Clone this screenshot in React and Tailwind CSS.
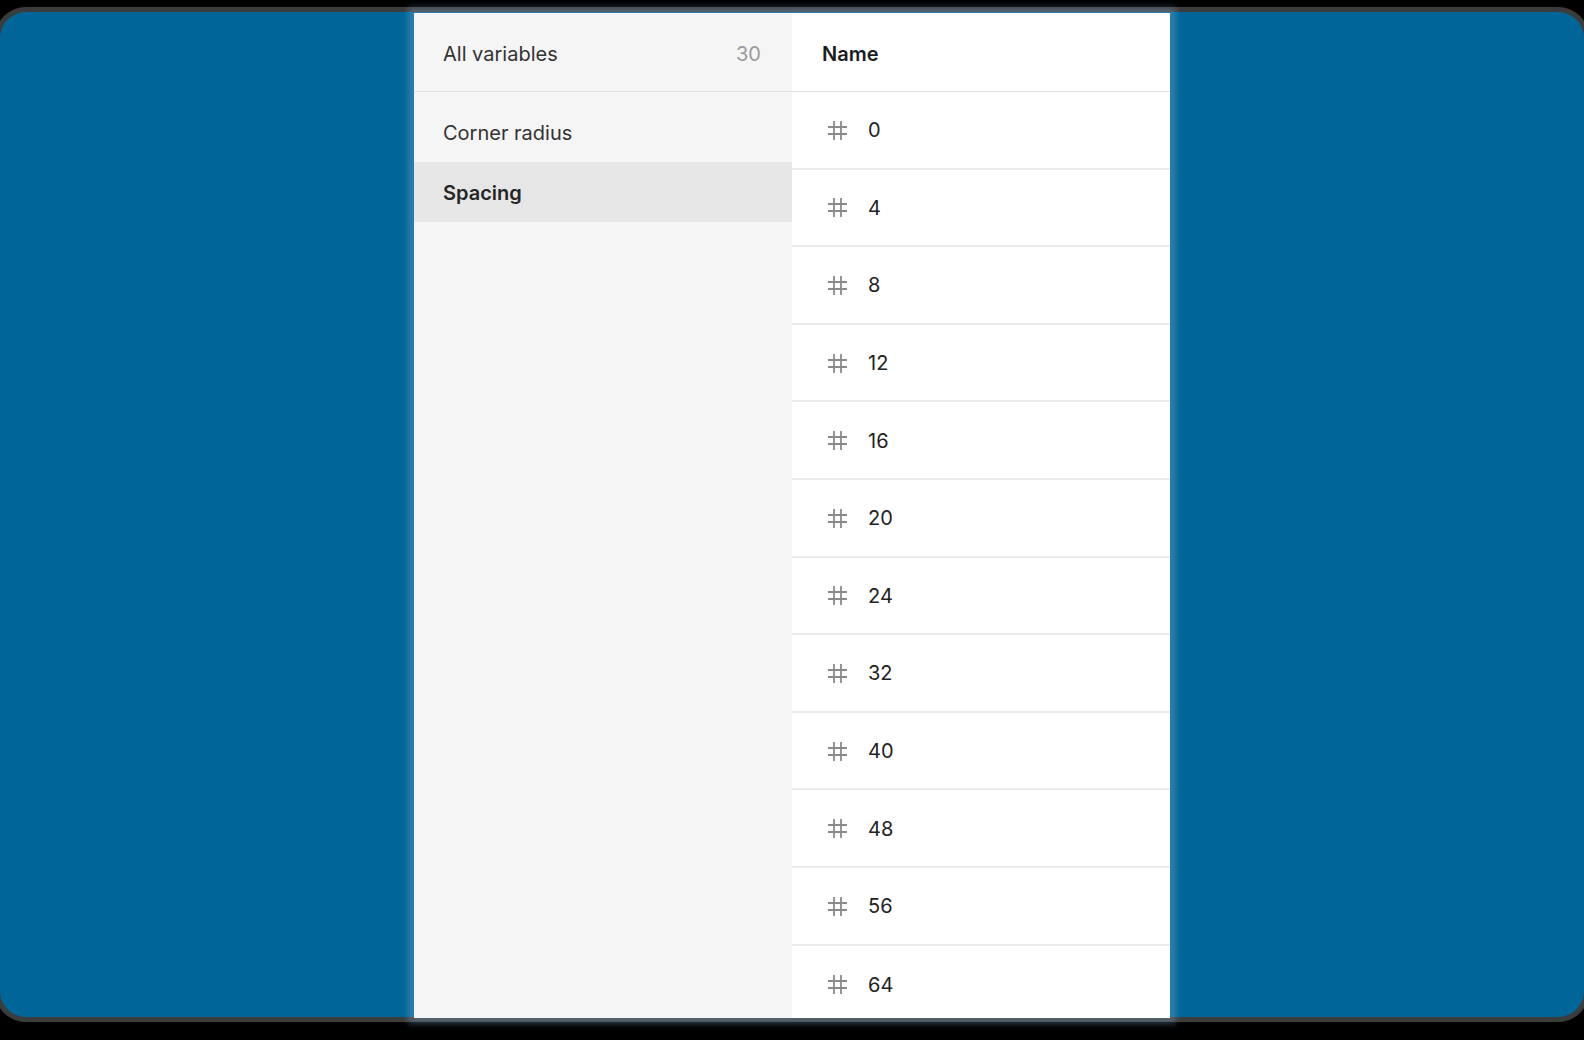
import React from 'react';

const collections = [
  { name: 'Corner radius', active: false },
  { name: 'Spacing', active: true },
];

const values = ['0', '4', '8', '12', '16', '20', '24', '32', '40', '48', '56', '64'];

const HashIcon = () => (
  <svg width="21" height="21" viewBox="0 0 21 21" fill="none" className="shrink-0">
    <path
      d="M7 1v19M14 1v19M1 7h19M1 14h19"
      stroke="#8a8a8a"
      strokeWidth="1.8"
    />
  </svg>
);

const App = () => {
  return (
    <div className="w-[1584px] h-[1040px] bg-black overflow-hidden pt-[12px] font-['Inter','Noto_Sans',sans-serif]">
      <div className="h-[1005px] w-full bg-[#006699] rounded-[26px] shadow-[0_0_0_5px_#3c3c3c] flex justify-center pt-[1px]">
        <div className="w-[756px] h-[1005px] flex shadow-[0_0_6px_6px_rgba(130,170,205,0.35)]">
          {/* collections */}
          <div className="w-[378px] bg-[#f5f5f5] flex flex-col">
            <div className="h-[79px] shrink-0 flex items-center justify-between pt-[4px] pl-[29px] pr-[31px] border-b border-[#e3e3e3]">
              <span className="text-[20px] text-[#333]">All variables</span>
              <span className="text-[20px] text-[#9a9a9a]">30</span>
            </div>
            <div className="pt-[10px] flex flex-col">
              {collections.map((c) => (
                <div
                  key={c.name}
                  className={`h-[60px] flex items-center pt-[2px] pl-[29px] text-[20px] ${
                    c.active ? 'bg-[#e6e6e6] font-semibold text-[#262626]' : 'text-[#333]'
                  }`}
                >
                  {c.name}
                </div>
              ))}
            </div>
          </div>

          {/* variables */}
          <div className="w-[378px] bg-white flex flex-col overflow-hidden">
            <div className="h-[79px] shrink-0 flex items-center pt-[4px] pl-[30px] border-b border-[#e3e3e3]">
              <span className="text-[20px] font-semibold text-[#1c1c1c]">Name</span>
            </div>
            {values.map((v, i) => (
              <div
                key={v}
                className={`h-[77.6px] shrink-0 flex items-center pt-[1px] pl-[35px] gap-[20px] ${
                  i < values.length - 1 ? 'border-b-2 border-[#ebebeb]' : ''
                }`}
              >
                <HashIcon />
                <span className="text-[20px] text-[#222]">{v}</span>
              </div>
            ))}
          </div>
        </div>
      </div>
    </div>
  );
};

export default App;
